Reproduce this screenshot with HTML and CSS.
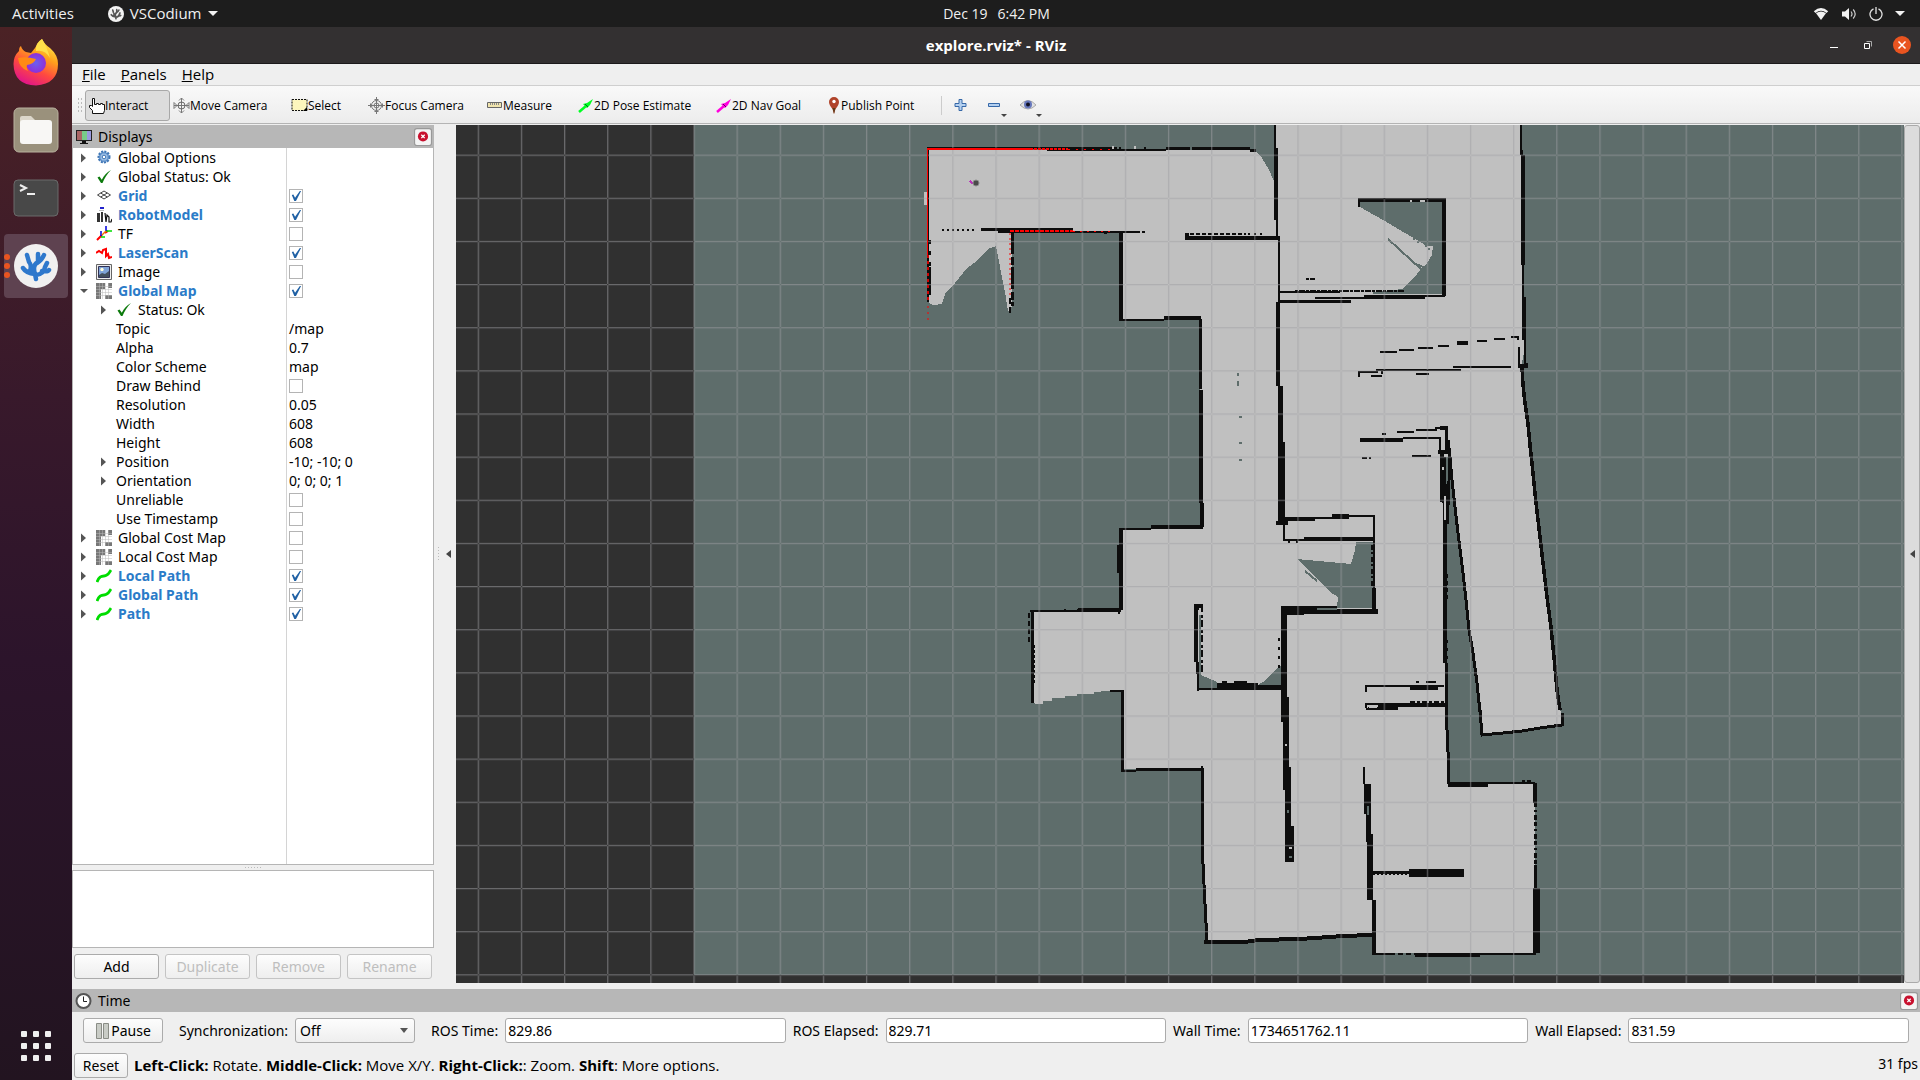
FILE: index.html
```html
<!DOCTYPE html>
<html lang="en">
<head>
<meta charset="utf-8">
<title>explore.rviz* - RViz</title>
<link rel="stylesheet" href="styles.css">
</head>
<body>
<svg class="sprite" aria-hidden="true">
  <symbol id="i-closed" viewBox="0 0 8 10"><path d="M1 0.500L6 5 1 9.500z" fill="#555"/></symbol>
  <symbol id="i-open" viewBox="0 0 8 10"><path d="M0 3h8L4 7z" fill="#555"/></symbol>
  <symbol id="i-gear" viewBox="0 0 16 16"><circle cx="8" cy="7" r="5.500" fill="#9fc0e6" stroke="#3f76b5" stroke-width="2" stroke-dasharray="2 1.200"/><circle cx="8" cy="7" r="4.200" fill="#9fc0e6" stroke="#4a80bf"/><circle cx="8" cy="7" r="1.800" fill="#fff" stroke="#3f76b5"/></symbol>
  <symbol id="i-ok" viewBox="0 0 16 16"><path d="M1.500 8.500L3.500 7.500 5.800 10.800C8 6.500 10.500 3.500 15 1 11 5 8.500 9 6.500 14H5z" fill="#0c7a0c"/></symbol>
  <symbol id="i-grid" viewBox="0 0 16 16"><path d="M1.500 7L8 3l6.500 4L8 11zM4.700 5l6.600 4M11.300 5l-6.600 4" fill="none" stroke="#444"/></symbol>
  <symbol id="i-robot" viewBox="0 0 16 16"><path d="M4 1h4" stroke="#22c" stroke-width="2"/><path d="M3 3.500h5" stroke="#bbb"/><path d="M1 6h3v9H1zM5 5h2v10H5z" fill="#333"/><path d="M9 6l1 9 1-7 2 2v5h2l1-3" fill="none" stroke="#111" stroke-width="1.200"/></symbol>
  <symbol id="i-tf" viewBox="0 0 16 16"><path d="M1 14l5-5M9 7l3-2" stroke="#f00" stroke-width="2"/><path d="M10 5h6M5 11h4" stroke="#0d0" stroke-width="1.500"/><path d="M5 5v5M10 0v5" stroke="#00d" stroke-width="1.500"/><path d="M6 9l4-4" stroke="#e70" stroke-width="1.500"/></symbol>
  <symbol id="i-laser" viewBox="0 0 16 16"><path d="M0 8l3-2 3 2 1-3 3-1v7l2-2 1 4 3-1" fill="none" stroke="#f00" stroke-width="2"/></symbol>
  <symbol id="i-image" viewBox="0 0 16 16"><path d="M.5.500h15v15H.5z" fill="#eee" stroke="#666"/><path d="M2.500 2.500h11v11h-11z" fill="#7fa3d8" stroke="#335"/><path d="M3 11l3-2 3 1 4-3v6H3z" fill="#44505e"/><circle cx="6" cy="5.500" r="1.700" fill="#ffd"/></symbol>
  <symbol id="i-map" viewBox="0 0 16 16"><path d="M0 0h16v16H0z" fill="#fff"/><path d="M0 0h9v6H5v10H0zM12 0h4v5h-4zM9 12h7v4H9z" fill="#777"/><path d="M3.500 0v16M6.500 0v16M9.500 0v16M12.500 0v16M0 3.500h16M0 6.500h16M0 9.500h16M0 12.500h16" stroke="#bbb" stroke-width=".5"/></symbol>
  <symbol id="i-path" viewBox="0 0 16 16"><path d="M1 14C3 8 6 8 8 8 12 8 13 5 15 2" fill="none" stroke="#0d0" stroke-width="2.800"/></symbol>
  <symbol id="i-close" viewBox="0 0 16 16"><rect x=".5" y=".5" width="15" height="15" rx="2" fill="#f4f4f4" stroke="#999"/><circle cx="8" cy="7.500" r="4.500" fill="#c8102e"/><path d="M6.500 6l3 3M9.500 6l-3 3" stroke="#fff" stroke-width="1.200"/></symbol>
  <symbol id="i-coral" viewBox="0 0 44 44"><g fill="none" stroke="currentColor" stroke-width="4.500" stroke-linecap="round" stroke-linejoin="round"><path d="M22 35L21 30M9 24q3 5 12 6M16 27q2-6-1-9l-2-7M21 30q-3-9 3-12V10M23 19q5-3 7-8M22 31q8-1 9-8l2-4M28 27q6 1 7-1"/></g></symbol>
</svg>

<header class="topbar">
  <div class="topbar-left"><a href="#activities">Activities</a>
    <a class="appmenu" href="#app"><svg width="16" height="16" viewBox="0 0 44 44"><circle cx="22" cy="22" r="22" fill="#f2f2f2"/><use href="#i-coral" width="44" height="44" color="#555"/></svg>VSCodium<svg width="10" height="6"><path d="M0 0h10L5 5z" fill="#f2f2f2"/></svg></a>
  </div>
  <div class="clock"><span>Dec 19</span><span>6:42 PM</span></div>
  <div class="topbar-right">
    <svg width="16" height="14" viewBox="0 0 16 14"><path d="M.8 4.200Q8-2.200 15.200 4.200L13.500 6Q8 1.500 2.500 6z" fill="#f2f2f2"/><path d="M3 6.200Q8 2.800 13 6.200L8 13z" fill="#f2f2f2"/></svg>
    <svg width="16" height="14" viewBox="0 0 16 14"><path d="M1 4.500h3L8 1v12L4 9.500H1z" fill="#f2f2f2"/><path d="M10 4.500q2 2.500 0 5M12.200 2.500q4 4.500 0 9" fill="none" stroke="#ccc" stroke-width="1.200"/></svg>
    <svg width="14" height="14" viewBox="0 0 14 14"><path d="M4.500 1.800A6 6 0 1 0 9.500 1.800M7 0v7" fill="none" stroke="#e4e4e4" stroke-width="1.300"/></svg>
    <svg width="10" height="6"><path d="M0 0h10L5 5z" fill="#f2f2f2"/></svg>
  </div>
</header>

<div class="desktop">
<nav class="dock" aria-label="Dock">
  <a class="tile" href="#firefox" aria-label="Firefox"><svg width="46" height="48" viewBox="0 0 46 48">
    <defs><linearGradient id="ff" x1=".8" y1="0" x2=".3" y2="1"><stop offset="0" stop-color="#fff44f"/><stop offset=".35" stop-color="#ffa21c"/><stop offset=".65" stop-color="#ff4a3f"/><stop offset="1" stop-color="#e0128c"/></linearGradient><radialGradient id="fp"><stop offset="0" stop-color="#6b5ff0"/><stop offset="1" stop-color="#8f2fd8"/></radialGradient></defs>
    <path d="M29 1q3 6 8 9 8 7 8 16 0 20-22 21.500Q1 47 .5 26 .5 18 6 13q0-4 2-5 1 4 5 6l5 1 4-5q2-5 7-9z" fill="url(#ff)"/><circle cx="23" cy="25" r="10" fill="url(#fp)"/><path d="M5 20q8-2 18 1-2 5-9 6-1 2 1 6Q6 30 5 20z" fill="#ff8a16"/><path d="M23 13q9-2 14 7-3-11-8-19-7 4-6 12z" fill="#ffe04a"/></svg></a>
  <a class="tile" href="#files" aria-label="Files"><svg width="46" height="46"><rect x="1" y="1" width="44" height="44" rx="5" fill="#9a917c" stroke="#b9b29f"/><path d="M7 11q0-2 2-2h9l4 4h14v10H7z" fill="#dcd7cb"/><rect x="7" y="13" width="32" height="24" rx="3" fill="#f8f7f5"/></svg></a>
  <a class="tile" href="#terminal" aria-label="Terminal"><svg width="46" height="38"><rect x="1" y="1" width="44" height="36" rx="4" fill="#484848" stroke="#6a6a6a"/><path d="M7 6l6 3-6 3M14 15h8" fill="none" stroke="#eee" stroke-width="2"/></svg></a>
  <a class="tile active" href="#vscodium" aria-label="VSCodium"><svg class="dots" width="8" height="24"><circle cx="3" cy="3" r="3"/><circle cx="3" cy="12" r="3"/><circle cx="3" cy="21" r="3"/></svg><svg width="46" height="46" viewBox="-1 -1 46 46"><circle cx="22" cy="22" r="22" fill="#f1f0f0"/><use href="#i-coral" width="44" height="44" color="#2f78cc"/></svg></a>
  <a class="apps" href="#apps" aria-label="Show Applications"><svg width="32" height="32" fill="#f0eff0"><rect x="1" y="1" width="6" height="6" rx="1"/><rect x="13" y="1" width="6" height="6" rx="1"/><rect x="25" y="1" width="6" height="6" rx="1"/><rect x="1" y="13" width="6" height="6" rx="1"/><rect x="13" y="13" width="6" height="6" rx="1"/><rect x="25" y="13" width="6" height="6" rx="1"/><rect x="1" y="25" width="6" height="6" rx="1"/><rect x="13" y="25" width="6" height="6" rx="1"/><rect x="25" y="25" width="6" height="6" rx="1"/></svg></a>
</nav>

<main class="window">
  <div class="titlebar"><h1>explore.rviz* - RViz</h1>
    <div class="controls">
      <button aria-label="Minimize"><svg width="18" height="18"><path d="M5 11.500h8" stroke="#fff"/></svg></button>
      <button aria-label="Restore"><svg width="18" height="18"><path d="M5.500 7.500h5v5h-5z" fill="none" stroke="#fff"/><path d="M7.500 5.500h5v5" fill="none" stroke="#aaa"/></svg></button>
      <button aria-label="Close"><svg width="18" height="18"><circle cx="9" cy="9" r="9" fill="#e95420"/><path d="M5.500 5.500l7 7M12.500 5.500l-7 7" stroke="#fff" stroke-width="1.500"/></svg></button>
    </div></div>
  <nav class="menubar"><a href="#file"><u>F</u>ile</a><a href="#panels"><u>P</u>anels</a><a href="#help"><u>H</u>elp</a></nav>
  <div class="toolbar">
    <span class="grip"></span>
    <div class="tools">
      <button class="on"><svg width="17" height="17"><path d="M4.500 16.500v-3l-3-3v-2h2l1 1V1.500h2v6h2v-1h2v1h2v-1h2v1h2v6l-1 3z" fill="#fff" stroke="#111"/></svg>Interact</button>
      <button><svg width="17" height="17"><path d="M8.500 1v15M1 8.500h15M6 3.500L8.500 1 11 3.500M6 13.500L8.500 16l2.500-2.500M1 5.500v6l3-3zM16 5.500v6l-3-3z" fill="#fff" stroke="#777"/><circle cx="8.500" cy="8.500" r="3.500" fill="none" stroke="#666"/></svg>Move Camera</button>
      <button><svg width="17" height="17"><path d="M1 2.500h15v11H1z" fill="#fdf6bd" stroke="#111" stroke-dasharray="2 1"/><path d="M16 10v4h-4z"/></svg>Select</button>
      <button><svg width="17" height="17"><circle cx="8.500" cy="8.500" r="5" fill="none" stroke="#777"/><circle cx="8.500" cy="8.500" r="2.500" fill="none" stroke="#777"/><path d="M8.500 0v17M0 8.500h17M6.500 2.500h4M6.500 14.500h4M2.500 6.500v4M14.500 6.500v4" stroke="#777"/></svg>Focus Camera</button>
      <button><svg width="17" height="17"><path d="M1.500 5.500h14v5h-14z" fill="#f0e4ae" stroke="#666"/><path d="M4.500 6v2M6.500 6v2M8.500 6v2M10.500 6v2M12.500 6v2" stroke="#888"/></svg>Measure</button>
      <button><svg width="17" height="17"><path d="M2 15l7-6" stroke="#0f2" stroke-width="2.500"/><path d="M6 7l4-1 6-4-3 6-3 3z" fill="#0f2"/><path d="M8 7l3 3" stroke="#062"/></svg>2D Pose Estimate</button>
      <button><svg width="17" height="17"><path d="M2 15l7-6" stroke="#f0d" stroke-width="2.500"/><path d="M6 7l4-1 6-4-3 6-3 3z" fill="#f0d"/><path d="M8 7l3 3" stroke="#606"/></svg>2D Nav Goal</button>
      <button><svg width="14" height="17"><path d="M7 0a5 5 0 0 1 5 5q0 3-3.500 7L7 17l-1.500-5Q2 8 2 5a5 5 0 0 1 5-5z" fill="#b0432a"/><path d="M5.500 11h3L7 17z" fill="#5e3b18"/><circle cx="7" cy="4.500" r="1.700" fill="#fff"/></svg>Publish Point</button>
    </div>
    <div class="edit">
      <button aria-label="Add tool"><svg width="18" height="20"><path d="M7 4.500h3v4h4v3h-4v4H7v-4H3v-3h4z" fill="#b4d0f0" stroke="#3668a8"/></svg></button>
      <button aria-label="Remove tool"><svg width="24" height="20"><path d="M3.500 8.500h11v3h-11z" fill="#b4d0f0" stroke="#3668a8"/><path d="M16 19h6l-3 3z" fill="#444"/></svg></button>
      <button aria-label="View options"><svg width="24" height="20"><path d="M0 10Q8 1 16 10 8 18 0 10z" fill="#e2e2e2" stroke="#aaa"/><circle cx="8" cy="9.500" r="4" fill="#6677bb"/><circle cx="8" cy="9.500" r="2" fill="#112"/><path d="M16 19h6l-3 3z" fill="#444"/></svg></button>
    </div>
  </div>

  <div class="workspace">
    <section class="displays" aria-label="Displays">
      <h2 class="panelhead"><svg width="18" height="18"><path d="M1 2h16v11H1z" fill="#222"/><path d="M2 3h5v9H2z" fill="#a66"/><path d="M7 3h5v9H7z" fill="#7c8"/><path d="M12 3h4v9h-4z" fill="#99d"/><path d="M7 13h4v2h2v1H5v-1h2z" fill="#111"/></svg><span>Displays</span><button aria-label="Close Displays"><svg width="18" height="18"><use href="#i-close"/></svg></button></h2>
      <div class="treebox">
      <table class="tree"><colgroup><col class="names"><col></colgroup><tbody>
        <tr><td><div class="node"><svg class="arrow"><use href="#i-closed"/></svg><svg class="icon"><use href="#i-gear"/></svg>Global Options</div></td><td></td></tr>
        <tr><td><div class="node"><svg class="arrow"><use href="#i-closed"/></svg><svg class="icon"><use href="#i-ok"/></svg>Global Status: Ok</div></td><td></td></tr>
        <tr><td><div class="node enabled"><svg class="arrow"><use href="#i-closed"/></svg><svg class="icon"><use href="#i-grid"/></svg><label for="c1">Grid</label></div></td><td><input type="checkbox" id="c1" checked></td></tr>
        <tr><td><div class="node enabled"><svg class="arrow"><use href="#i-closed"/></svg><svg class="icon"><use href="#i-robot"/></svg><label for="c2">RobotModel</label></div></td><td><input type="checkbox" id="c2" checked></td></tr>
        <tr><td><div class="node"><svg class="arrow"><use href="#i-closed"/></svg><svg class="icon"><use href="#i-tf"/></svg><label for="c3">TF</label></div></td><td><input type="checkbox" id="c3"></td></tr>
        <tr><td><div class="node enabled"><svg class="arrow"><use href="#i-closed"/></svg><svg class="icon"><use href="#i-laser"/></svg><label for="c4">LaserScan</label></div></td><td><input type="checkbox" id="c4" checked></td></tr>
        <tr><td><div class="node"><svg class="arrow"><use href="#i-closed"/></svg><svg class="icon"><use href="#i-image"/></svg><label for="c5">Image</label></div></td><td><input type="checkbox" id="c5"></td></tr>
        <tr><td><div class="node enabled"><svg class="arrow"><use href="#i-open"/></svg><svg class="icon"><use href="#i-map"/></svg><label for="c6">Global Map</label></div></td><td><input type="checkbox" id="c6" checked></td></tr>
        <tr><td><div class="node child"><svg class="arrow"><use href="#i-closed"/></svg><svg class="icon"><use href="#i-ok"/></svg>Status: Ok</div></td><td></td></tr>
        <tr><td><div class="node leaf">Topic</div></td><td>/map</td></tr>
        <tr><td><div class="node leaf">Alpha</div></td><td>0.7</td></tr>
        <tr><td><div class="node leaf">Color Scheme</div></td><td>map</td></tr>
        <tr><td><div class="node leaf"><label for="c7">Draw Behind</label></div></td><td><input type="checkbox" id="c7"></td></tr>
        <tr><td><div class="node leaf">Resolution</div></td><td>0.05</td></tr>
        <tr><td><div class="node leaf">Width</div></td><td>608</td></tr>
        <tr><td><div class="node leaf">Height</div></td><td>608</td></tr>
        <tr><td><div class="node child"><svg class="arrow"><use href="#i-closed"/></svg>Position</div></td><td>-10; -10; 0</td></tr>
        <tr><td><div class="node child"><svg class="arrow"><use href="#i-closed"/></svg>Orientation</div></td><td>0; 0; 0; 1</td></tr>
        <tr><td><div class="node leaf"><label for="c8">Unreliable</label></div></td><td><input type="checkbox" id="c8"></td></tr>
        <tr><td><div class="node leaf"><label for="c9">Use Timestamp</label></div></td><td><input type="checkbox" id="c9"></td></tr>
        <tr><td><div class="node"><svg class="arrow"><use href="#i-closed"/></svg><svg class="icon"><use href="#i-map"/></svg><label for="c10">Global Cost Map</label></div></td><td><input type="checkbox" id="c10"></td></tr>
        <tr><td><div class="node"><svg class="arrow"><use href="#i-closed"/></svg><svg class="icon"><use href="#i-map"/></svg><label for="c11">Local Cost Map</label></div></td><td><input type="checkbox" id="c11"></td></tr>
        <tr><td><div class="node enabled"><svg class="arrow"><use href="#i-closed"/></svg><svg class="icon"><use href="#i-path"/></svg><label for="c12">Local Path</label></div></td><td><input type="checkbox" id="c12" checked></td></tr>
        <tr><td><div class="node enabled"><svg class="arrow"><use href="#i-closed"/></svg><svg class="icon"><use href="#i-path"/></svg><label for="c13">Global Path</label></div></td><td><input type="checkbox" id="c13" checked></td></tr>
        <tr><td><div class="node enabled"><svg class="arrow"><use href="#i-closed"/></svg><svg class="icon"><use href="#i-path"/></svg><label for="c14">Path</label></div></td><td><input type="checkbox" id="c14" checked></td></tr>
      </tbody></table>
      </div>
      <span class="hgrip"></span>
      <div class="help"></div>
      <div class="actions"><button>Add</button><button disabled>Duplicate</button><button disabled>Remove</button><button disabled>Rename</button></div>
    </section>

    <div class="splitter"><span class="vgrip"></span><svg width="5" height="8"><path d="M5 0v8L0 4z" fill="#444"/></svg></div>

    <div class="view">
    <svg viewBox="456 125 1448 858" preserveAspectRatio="xMinYMin slice" shape-rendering="crispEdges" role="img" aria-label="Occupancy map">
      <defs><pattern id="cells" patternUnits="userSpaceOnUse" x="477.700" y="154.600" width="43.140" height="43.140"><path d="M0 0h43.140v1.300H0zM0 0v43.140h1.300V0z" fill="#a0a0a4" fill-opacity=".52" shape-rendering="auto"/></pattern></defs>
      <path d="M456 125h1448v858H456z" fill="#303030"/>
      <path d="M694 125h1210v850H694z" fill="#5e6d6b"/>
      <path fill="#c0c0c0" fill-rule="evenodd" d="M1276 125H1522V265L1524 297V353L1521 368 1525 403 1528 424 1532 470 1536 503 1540 537 1547 597 1551 627 1554 657 1561 715 1562 725 1522 731 1483 736 1480 710 1473 653 1466 600 1463 573 1455 507 1450 457H1446V590L1447 707 1449 784H1535V953H1372V934L1205 943 1202 769H1121V690L1094 692V694H1077V696H1065V698H1052V701H1043V704H1035L1031 700V611H1121V529H1200V319H1121V232H1012V306L1009 313 1007 306 1006 297 1000 267 996 246 988 249 977 261 967 268 955 283 946 292 942 304 933 305 928 302V205H924V192H928V150H1255L1262 158 1268 168 1274 181H1276z
        M1360 202H1443V294H1373V292L1403 289 1417 274 1427 263 1432 255 1433 246H1427L1383 220 1360 207z
        M1297 559L1351 564 1355 550 1356 542H1373V608H1337L1338 597 1330 592z
        M1199 613L1201 675 1217 682V688H1199z M1283 664L1277 668 1263 682 1258 685H1283z"/>
      <g fill="none" stroke="#5e6d6b" stroke-width="2"><path d="M1388 239l34 31M1413 239h2M1417 242h2M1425 246h2M1428 249h2M1416 264l10 4"/><path d="M1238 373v3M1238 381v5M1239 417h3M1239 443h3M1239 460h3M1305 571l12 10"/></g>
      <g fill="none" stroke="#0d0d0d" stroke-width="2">
        <path d="M927 148H1047M928 148V302M1112 150H1166M1010 232H1140M1142 232h3M1119 320H1164M1275 125v23M1277 220v17M1279 237v65M1359 202v5"/>
        <path d="M942 230H976" stroke-dasharray="2 3"/><path d="M1010 298V314" stroke-dasharray="6 3"/>
        <path d="M1190 234H1246" stroke-dasharray="4 2"/><path d="M1248 234H1266" stroke-dasharray="2 4"/>
        <path d="M1280 292H1340M1315 298H1425M1364 296H1445M1306 279h3M1310 279h5"/><path d="M1295 291H1405" stroke-dasharray="3 1 6 1"/>
        <path d="M1521 125v30M1523 265v32M1525 340v28M1519 347v21M1522 150v8"/>
        <path d="M1380 352h17M1399 350h15M1418 348h15M1438 346h11M1477 341h10M1494 339h11M1511 337h7v3"/>
        <path d="M1359 377v-5h18v-2h84M1453 367h58M1371 376h11M1416 374h13M1382 371v3"/>
        <path d="M1397 432h17M1416 430h20v-2h8M1382 434h4M1403 438h37v14M1362 458h5M1369 458h2M1412 456h19"/>
        <path d="M1315 518h18M1349 516h25v72M1284 523v17M1283 540h21M1288 542h2M1296 542h2"/>
        <path d="M1372 545V588" stroke-dasharray="5 2 2 3"/><path d="M1202 605V675" stroke-dasharray="7 3 3 2"/>
        <path d="M1198 662v29M1198 689h86M1121 529h30M1030 611h82M1110 691h12M1121 771h15M1364 767v17M1118 545v28"/>
        <path d="M1034 645v40" stroke-dasharray="3 2"/><path d="M1029 613v30" stroke-dasharray="5 3"/>
        <path d="M1366 692v-6h78M1366 708v-4h79M1366 709h31v-3h48M1416 682h3M1426 682h10M1368 708h10"/>
        <path d="M1372 954H1390M1416 954H1536M1447 783h88"/><path d="M1390 954h26" stroke-dasharray="5 3"/><path d="M1522 781h3M1527 781h4"/>
        <path d="M1373 874h38" stroke-dasharray="2 2"/><path d="M1119 614v-3M1065 609v2M1078 609v2"/>
        <path d="M1447 640v30" stroke-dasharray="3 5"/><path d="M1279 638v30" stroke-dasharray="3 6"/><path d="M1447 574v28" stroke-dasharray="4 3"/>
        <path d="M1114 148h3M1119 148h2M1144 148h2M1104 233h3"/>
      </g>
      <g fill="none" stroke="#0d0d0d" stroke-width="3">
        <path d="M981 229.500h20M1166 148h24M1192 148h58M1250 150h6M1200 319v70M1280 301h71M1464 873h-54M1373 872h40"/>
        <path d="M1012 232V306" stroke-dasharray="22 3 8 2"/><path d="M929 240v30" stroke-dasharray="4 7"/>
        <path d="M1446 428v23M1410 688h28M1397 706h-19M1332 515h17"/><path d="M1410 702h35" stroke-dasharray="5 2 3 2"/>
        <path d="M1032 611V703M1122 690V770M1136 769h66M1202 766l1 98 2 40 2 38M1446 663v44l2 45M1448 752v30M1415 955h65"/>
        <path d="M1535 803V870" stroke-dasharray="4 3 2 3 5 2"/><path d="M1535 865v25"/>
        <path d="M1480 710L1482 735 1503 733 1522 731 1540 728 1562 725V713"/>
        <path d="M1448 440L1450 457 1452 480 1455 507 1458 533 1463 573 1466 600 1469 630 1473 653 1477 683 1480 712"/>
        <path d="M1450 456l-2 50M1447 484v40"/>
      </g>
      <g fill="none" stroke="#0d0d0d" stroke-width="4">
        <path d="M1047 149h65M929 267v28M1121 232v88M1164 318h37M1185 238h95M1187 233v6M1276 148v72M1278 302v84"/>
        <path d="M1358 200h88M1444 200v96M1523 155v110M1524 297v43M1518 366h8v-3"/>
        <path d="M1201 390v88l1 49M1151 527h52M1121 528v82M1284 519h31M1304 539h70M1332 517h17M1374 588v22M1276 523h12"/>
        <path d="M1440 428h8M1438 452h12M1360 440h43M1442 452v50M1445 500v163M1457 343h11"/>
        <path d="M1078 609.500h43M1283 614v99M1204 942h40l15-2 41-1 30-2 12-1 30-1M1448 785h40M1535 783v20M1374 900v53"/>
      </g>
      <path d="M1522 368L1523 385 1525 403 1528 424 1530 445 1533 473 1536 503 1540 537 1543 563 1547 597 1551 627 1554 657 1557 690 1560 710" fill="none" stroke="#0d0d0d" stroke-width="3.500"/>
      <path fill="#0d0d0d" d="M998 228h75v5h-75zM1278 386h5v56h-5zM1278 442h7v80h-7zM1194 604h9v6h-5v52h-4zM1199 662h-3v12h3zM1217 683h41v6h-41zM1258 685h26v3h-26zM1222 681h5v3h-5zM1234 681h13v3h-13zM1281 606h23v9h-23zM1304 606h33v8h-33zM1337 609h41v5h-41zM1281 614h6v96h-6zM1281 697h8v25h-8zM1283 720h6v70h-6zM1285 767h6v62h-6zM1285 826h9v36h-9zM1364 784h7v30h-7zM1366 812h5v30h-5zM1367 834h6v66h-6zM1409 869h55v8h-55zM1533 888h7v65h-7zM1442 457h4v46h-4z"/>
      <path fill="#5e6d6b" d="M1317 608h20v2h-20zM1367 806h2v9h-2zM1287 810h2v3h-2zM1289 856h3v2h-3zM1199 615h2v60h-2z"/>
      <path fill="#c0c0c0" d="M1199 608h2v4h-2zM1444 496h2v24h-2zM1289 847h3v2h-3zM1369 706h8v2h-8zM1442 467h2v3h-2zM1112 146h2v3h-2zM1134 146h2v3h-2zM1285 744h2v2h-2zM1410 200h2v2h-2zM1420 200h5v2h-5z"/>
      <path d="M456 125h1448v858H456z" fill="url(#cells)"/>
      <g fill="none" stroke="#f00" stroke-width="1.500">
        <path d="M928 149H1030M927.500 148V255"/><path d="M1030 149H1068" stroke-dasharray="3 1"/><path d="M1068 149.500H1114" stroke-dasharray="2 6"/>
        <path d="M928 255V302" stroke-dasharray="3 3" opacity=".8"/><path d="M928 306V322" stroke-dasharray="2 4" opacity=".5"/>
        <path d="M1010 231H1073" stroke-dasharray="4 1"/><path d="M1073 231.500H1115" stroke-dasharray="2 5"/><path d="M1010 233V296" stroke-dasharray="2 3" opacity=".5"/>
      </g>
      <path d="M970 181l3 3" stroke="#b3b" stroke-width="2"/><circle cx="976" cy="183" r="3" fill="#4a4a4a" stroke="#8a8a8a" shape-rendering="auto"/>
    </svg>
    </div>
    <button class="collapse" aria-label="Show right panel"><svg width="5" height="8"><path d="M5 0v8L0 4z" fill="#444"/></svg></button>
  </div>

  <section class="time" aria-label="Time">
    <h2 class="panelhead"><svg width="18" height="18"><circle cx="8.500" cy="9" r="7" fill="#fff" stroke="#555" stroke-width="2"/><path d="M8.500 4.500V9.500H12" fill="none" stroke="#222"/></svg><span>Time</span><button aria-label="Close Time"><svg width="18" height="18"><use href="#i-close"/></svg></button></h2>
    <div class="timerow">
      <button class="pause"><svg width="15" height="18"><path d="M1.500 1.500h5v15h-5zM8.500 1.500h5v15h-5z" fill="#c9ccc6" stroke="#8a8d86"/></svg>Pause</button>
      <div class="sync"><label for="sync">Synchronization:</label><span class="selectwrap"><select id="sync"><option>Off</option></select><svg width="8" height="5"><path d="M0 0h8L4 5z" fill="#555"/></svg></span></div>
      <label for="rt">ROS Time:</label><input id="rt" type="text" value="829.86" readonly>
      <label for="re">ROS Elapsed:</label><input id="re" type="text" value="829.71" readonly>
      <label for="wt">Wall Time:</label><input id="wt" type="text" value="1734651762.11" readonly>
      <label for="we">Wall Elapsed:</label><input id="we" type="text" value="831.59" readonly>
    </div>
  </section>
  <footer class="status"><button>Reset</button><p><b>Left-Click:</b> Rotate. <b>Middle-Click:</b> Move X/Y. <b>Right-Click:</b>: Zoom. <b>Shift</b>: More options.</p><span>31 fps</span></footer>
</main>
</div>
</body>
</html>
```
FILE: styles.css
```css
* { box-sizing: border-box; }
html, body { height: 100%; }
body {
  margin: 0;
  display: flex;
  flex-direction: column;
  overflow: hidden;
  font: 14px/19px "Noto Sans", "Open Sans", sans-serif;
  color: #000;
  background: #efefef;
}
button, input, select { font: inherit; color: inherit; margin: 0; }
button { padding: 0; border: 0; background: none; }
a { color: inherit; text-decoration: none; }
svg { display: block; flex: none; }
.sprite { position: absolute; width: 0; height: 0; }

/* Shell top bar; the left padding keeps the clock centred over the window */
.topbar {
  display: grid;
  grid-template-columns: 1fr auto 1fr;
  align-items: center;
  height: 27px;
  padding: 0 15px 0 88px;
  background: #1d1d1d;
  color: #f0f0f0;
}
.topbar-left { display: flex; gap: 34px; margin-left: -76px; font-family: "Open Sans", sans-serif; font-size: 15px; }
.appmenu { display: flex; align-items: center; gap: 6px; }
.clock { display: flex; gap: 10px; font-family: "Open Sans", sans-serif; }
.topbar-right { display: flex; justify-content: flex-end; align-items: center; gap: 12px; }

.desktop { flex: 1; display: flex; min-height: 0; }
.dock {
  flex: 0 0 72px;
  display: flex;
  flex-direction: column;
  align-items: center;
  padding: 3px 0 18px;
  background: linear-gradient(#4b2225, #38192b 35%, #2c142b 60%, #221420);
}
.tile {
  position: relative;
  display: flex;
  align-items: center;
  justify-content: center;
  width: 64px;
  height: 64px;
  margin-bottom: 4px;
  border-radius: 4px;
}
.tile.active { background: #5e4250; }
.dots { position: absolute; left: 0; top: 20px; fill: #e95420; }
.apps { margin-top: auto; }

.window { flex: 1; display: flex; flex-direction: column; min-width: 0; background: #efefef; }
.titlebar {
  position: relative;
  display: flex;
  align-items: center;
  justify-content: center;
  height: 37px;
  background: #333031;
  border-bottom: 1px solid #1c1a1b;
  color: #fff;
}
.titlebar h1 { margin: 0; font: bold 15px/19px "Open Sans", sans-serif; }
.controls { position: absolute; right: 9px; top: 9px; display: flex; gap: 16px; }

.menubar { display: flex; gap: 15px; height: 21px; padding: 1px 10px; font-family: "Open Sans", sans-serif; font-size: 15px; }
.toolbar {
  display: flex;
  align-items: center;
  height: 39px;
  padding: 1px 0 0 5px;
  background: linear-gradient(#f9f9f9, #ececec);
  border-top: 1px solid #cfcfcf;
  border-bottom: 1px solid #b4b4b4;
}
.grip { width: 6px; height: 16px; margin-right: 2px; background: radial-gradient(circle, #bbb 1px, transparent 1px) 0 0 / 3px 4px; }
.tools {
  display: grid;
  grid-template-columns: 85px 118px 77px 118px 91px 138px 112px 117px;
  font-family: "Open Sans", sans-serif;
  font-size: 12px;
}
.tools button {
  display: flex;
  align-items: center;
  height: 31px;
  padding: 0 2px;
  border: 1px solid transparent;
  border-radius: 3px;
  white-space: nowrap;
}
.tools .on { background: #dcdcdc; border-color: #a8a8a8; }
.edit { display: flex; align-items: center; gap: 15px; height: 19px; padding-left: 10px; border-left: 1px solid #ccc; }
.edit button:last-child { margin-left: -4px; }
.edit svg { overflow: visible; }

.workspace { flex: 1; display: flex; min-height: 0; padding-top: 1px; }
.displays { flex: 0 0 362px; display: flex; flex-direction: column; min-height: 0; }
.panelhead {
  display: flex;
  align-items: center;
  gap: 5px;
  height: 23px;
  margin: 0;
  padding: 0 2px 0 3px;
  font-size: 14px;
  font-weight: normal;
  background: #b7b7b7;
}
.panelhead button { margin-left: auto; }
/* The column rule runs on below the last row */
.treebox {
  flex: 1;
  min-height: 0;
  overflow: hidden;
  border: 1px solid #b5b5b5;
  border-top: 0;
  background: linear-gradient(#d4d4d4, #d4d4d4) 213px 0 / 1px 100% no-repeat #fff;
}
.tree { width: 100%; border-collapse: collapse; table-layout: fixed; }
.tree .names { width: 214px; }
.tree td { height: 19px; padding: 0 0 0 2px; line-height: 19px; }
.tree td:first-child { padding: 0; }
.node { display: flex; align-items: center; height: 19px; padding-left: 7px; white-space: nowrap; }
.node.child { padding-left: 27px; }
.node.leaf { padding-left: 43px; }
.arrow { width: 8px; height: 10px; margin-right: 8px; }
.icon { width: 16px; height: 16px; margin-right: 6px; }
.enabled { color: #2a7bc8; font-weight: bold; }
input[type="checkbox"] {
  appearance: none;
  display: block;
  width: 14px;
  height: 14px;
  border: 1px solid #b4b4b4;
  background: #fff;
}
input[type="checkbox"]:checked::after {
  content: "";
  display: block;
  width: 12px;
  height: 12px;
  background: #1f60a4;
  clip-path: polygon(15% 45%, 28% 42%, 42% 68%, 82% 12%, 92% 12%, 50% 95%, 36% 95%);
}
.hgrip { align-self: center; width: 18px; height: 5px; background: radial-gradient(circle, #bbb 1px, transparent 1px) 0 0 / 3px 5px; }
.help { height: 78px; border: 1px solid #b5b5b5; background: #fff; }
.actions { display: grid; grid-template-columns: repeat(4, 1fr); gap: 6px; padding: 6px 2px 4px; }
.actions button, .pause, .status button, select {
  height: 25px;
  border: 1px solid #ababab;
  border-radius: 3px;
  background: linear-gradient(#fdfdfd, #eee);
}
.actions button:disabled { color: #bebebe; border-color: #c4c4c4; }
.splitter { flex: 0 0 22px; display: flex; align-items: center; gap: 6px; padding-left: 3px; }
.vgrip { width: 3px; height: 16px; background: radial-gradient(circle, #bbb 1px, transparent 1px) 0 0 / 3px 3px; }
.view { flex: 1; min-width: 0; min-height: 0; overflow: hidden; background: #303030; }
.view svg { width: 100%; height: 100%; }
.collapse {
  flex: 0 0 16px;
  display: flex;
  align-items: center;
  justify-content: center;
  border: 1px solid #aaa;
  border-radius: 3px;
  background: #dcdcdc;
}

.time { padding-top: 6px; }
.timerow { display: flex; align-items: center; gap: 7px; padding: 6px 11px 0; white-space: nowrap; }
.pause { display: flex; align-items: center; justify-content: center; gap: 1px; width: 80px; }
.sync { display: flex; align-items: center; gap: 7px; margin: 0 9px; }
.selectwrap { display: grid; align-items: center; }
.selectwrap select, .selectwrap svg { grid-area: 1 / 1; }
.selectwrap svg { justify-self: end; margin-right: 7px; pointer-events: none; }
select { appearance: none; width: 120px; padding: 0 4px; }
.timerow input {
  flex: 1 1 0;
  min-width: 0;
  height: 25px;
  padding: 0 2px;
  border: 1px solid #ababab;
  border-radius: 3px;
  background: #fff;
}
.status { display: flex; align-items: center; gap: 6px; padding: 10px 2px 2px; }
.status button { width: 54px; }
.status p { margin: 0; font-family: "Open Sans", sans-serif; font-size: 15px; }
.status span { margin: 0 0 4px auto; }
```
